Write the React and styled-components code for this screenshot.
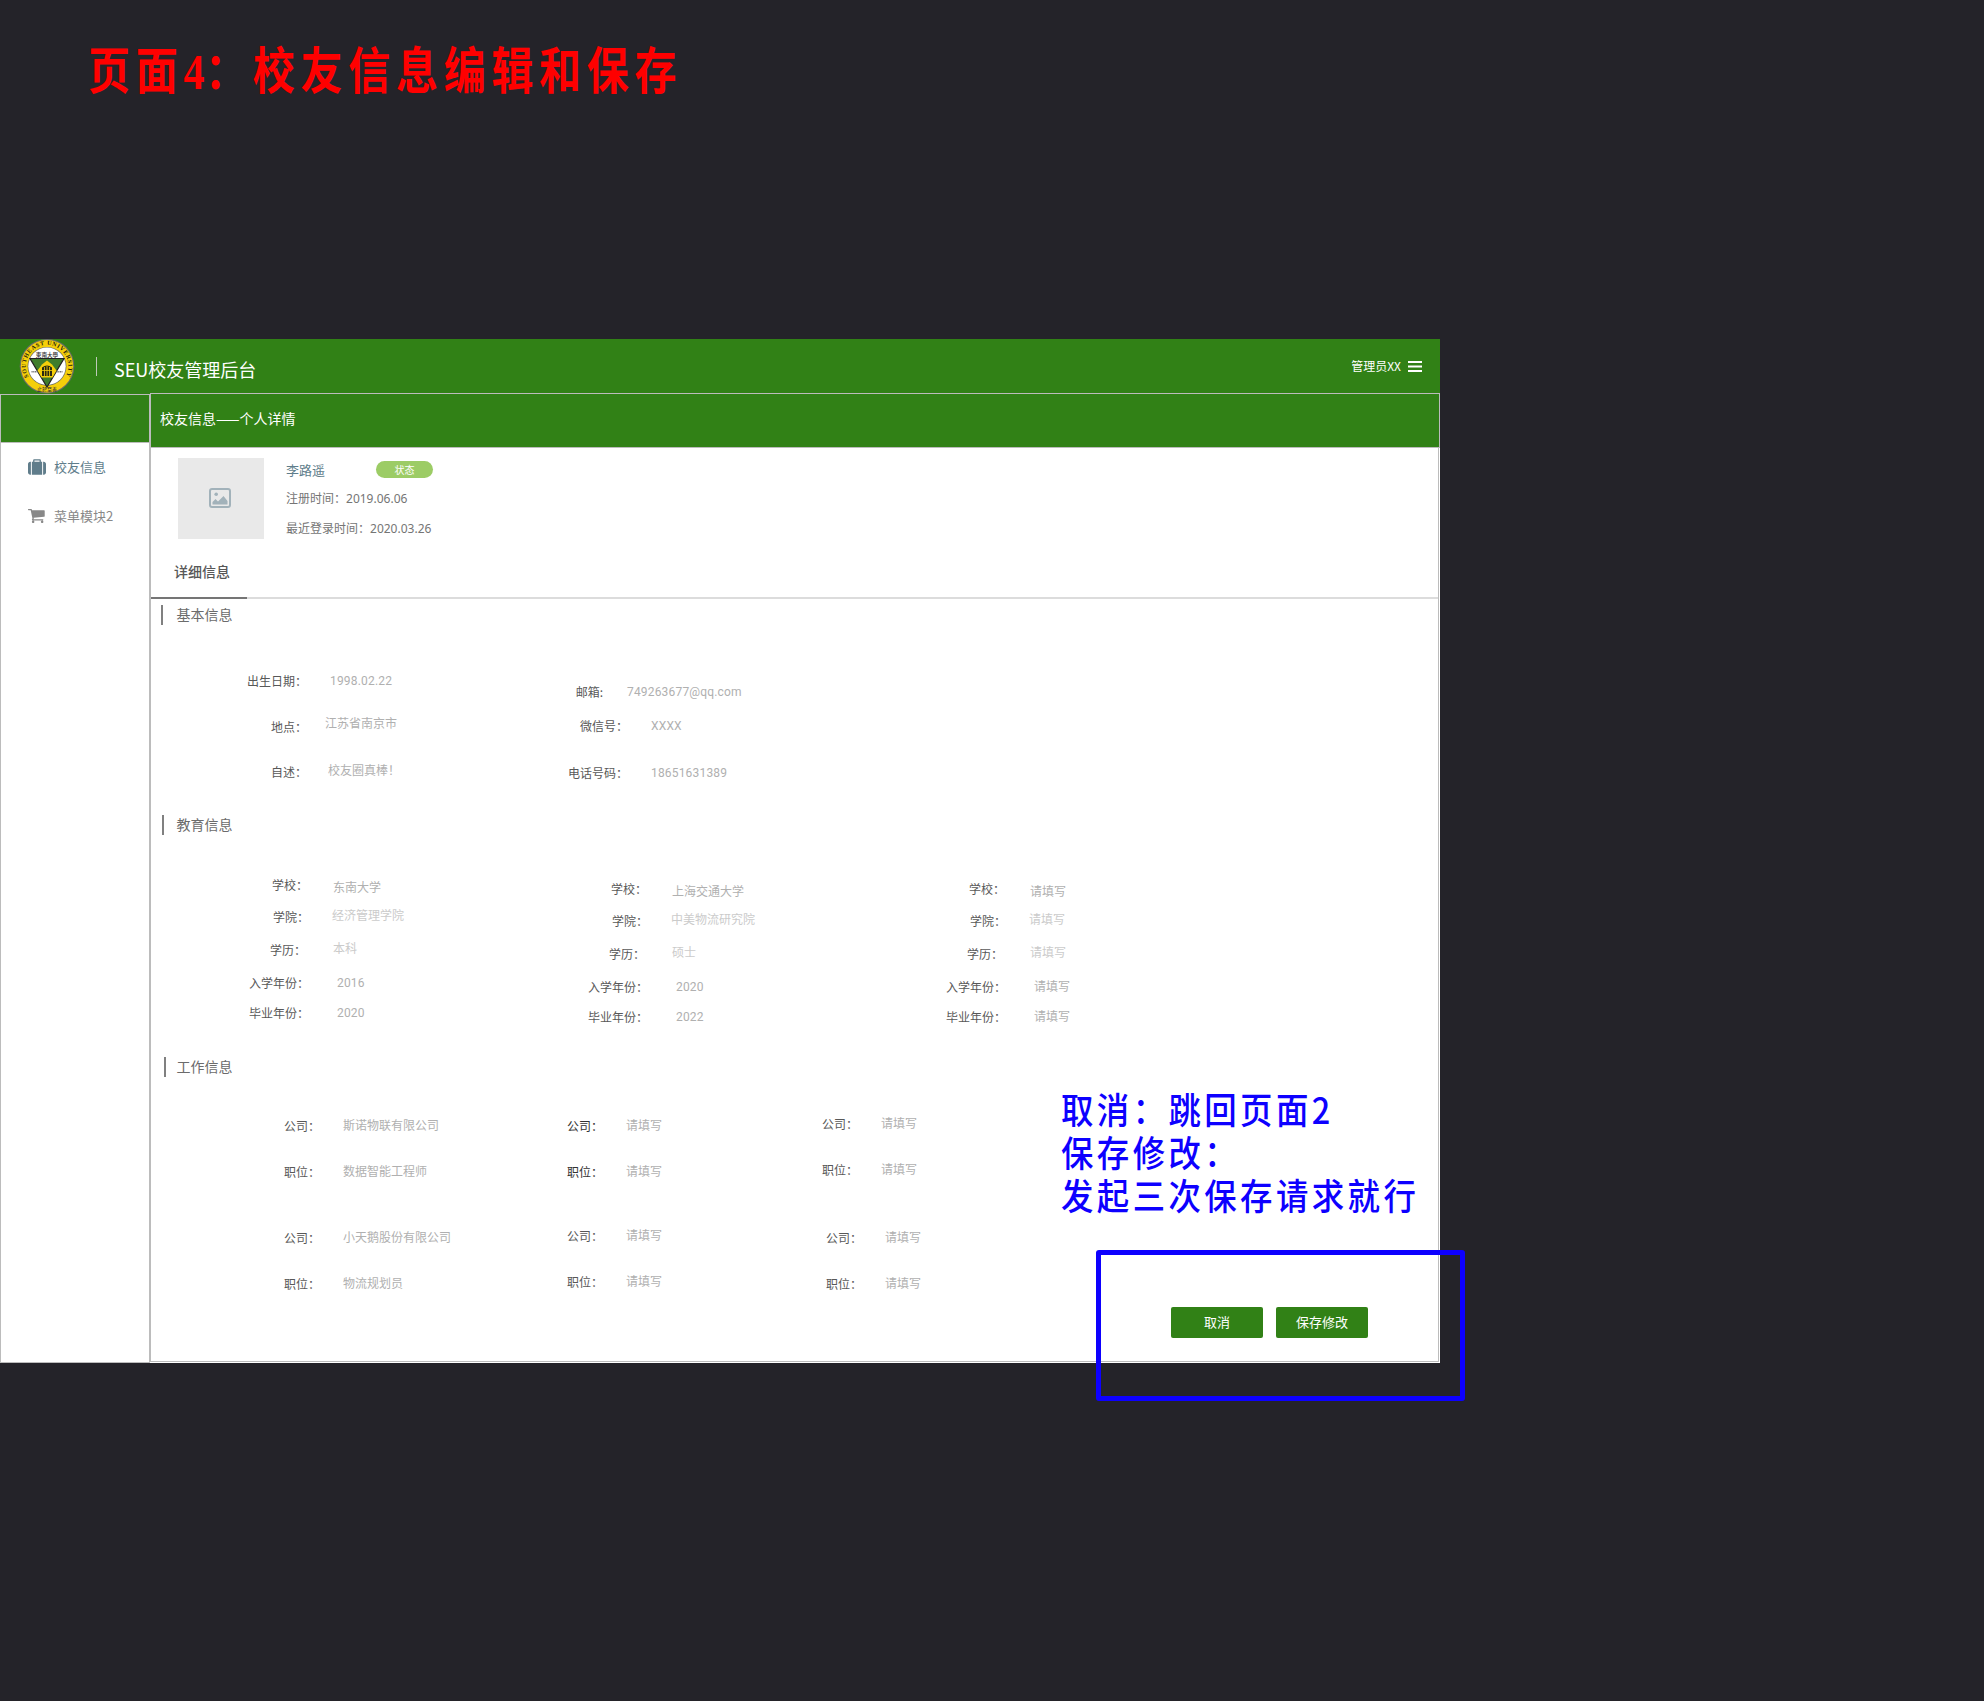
import React from "react";
import styled, { createGlobalStyle } from "styled-components";

const green = "#318116";
const line = "#bcbcbc";
const blue = "#0d00ff";

const GlobalStyle = createGlobalStyle`
  *, *::before, *::after { box-sizing: border-box; }
  html, body { margin: 0; background: #242329; }
  body {
    font-family: "Noto Sans CJK SC", sans-serif;
    font-size: 12px;
    line-height: 16px;
  }
`;

const Board = styled.div`
  position: relative;
  width: 1984px;
  height: 1701px;
  overflow: hidden;
`;

const BoardTitle = styled.h1`
  margin: 0;
  height: 339px;
  padding: 32px 0 0 88px;
  color: #ff0000;
  font-size: 50px;
  line-height: 70px;
  font-weight: 700;
  letter-spacing: 6.8px;
  white-space: nowrap;
`;

const Condensed = styled.span`
  display: inline-block;
  transform: scaleX(0.84);
  transform-origin: 0 50%;
`;

const TitleDigit = styled.span`
  font-family: "Liberation Serif", serif;
  letter-spacing: 0.8px;
`;

const Screen = styled.div`
  width: 1440px;
  height: 1024px;
  background: #fff;
`;

const TopBar = styled.header`
  display: flex;
  align-items: flex-start;
  height: 55px;
  padding-left: 19px;
  background: ${green};
  color: #fff;
`;

const LogoSvg = styled.svg`
  width: 56px;
  height: 55px;
`;

const Divider = styled.span`
  width: 1px;
  height: 19px;
  margin: 18px 0 0 21px;
  background: #bdc9b8;
`;

const Brand = styled.div`
  margin: 17px 0 0 17px;
  font-size: 18px;
  line-height: 26px;
`;

const Account = styled.div`
  display: flex;
  align-items: center;
  gap: 7px;
  margin: 19px 18px 0 auto;
`;

const Burger = styled.svg`
  width: 14px;
  height: 11px;
  margin-top: 1px;
`;

const Columns = styled.div`
  display: flex;
`;

const Sidebar = styled.nav`
  width: 150px;
  height: 969px;
  border: 1px solid ${line};
`;

const SidebarCap = styled.div`
  height: 48px;
  background: ${green};
  border-bottom: 1px solid ${line};
`;

const MenuItem = styled.a`
  display: flex;
  align-items: center;
  gap: 8px;
  height: 20px;
  margin-top: ${(p) => p.$before}px;
  padding-left: 27px;
  font-size: 13px;
  color: ${(p) => (p.$active ? "#607d8b" : "#888")};
  svg { width: 18px; height: 18px; fill: currentColor; }
`;

const Main = styled.main`
  display: flex;
  flex-direction: column;
  width: 1290px;
  height: 970px;
  margin-top: -1px;
`;

const PageHead = styled.div`
  height: 55px;
  padding: 15px 0 0 9px;
  border: 1px solid ${line};
  background: ${green};
  color: #fff;
  font-size: 14px;
  line-height: 18px;
`;

const Panel = styled.div`
  display: flex;
  flex-direction: column;
  height: 914px;
  margin-right: 1px;
  border: 1px solid ${line};
  border-top: 0;
`;

const Profile = styled.div`
  display: flex;
  height: 91px;
  padding: 10px 0 0 27px;
`;

const Avatar = styled.div`
  display: flex;
  align-items: center;
  justify-content: center;
  width: 86px;
  height: 81px;
  padding: 0 2px 1px 0;
  background: #e9e9e9;
  svg { width: 22px; height: 20px; }
`;

const ProfileText = styled.div`
  margin-left: 22px;
  color: #757575;
`;

const NameRow = styled.div`
  display: flex;
  width: 147px;
  height: 20px;
  margin-top: 3px;
  justify-content: space-between;
`;

const Name = styled.span`
  margin-top: 1px;
  font-size: 13px;
  color: #607d8b;
`;

const Badge = styled.span`
  width: 57px;
  height: 17px;
  border-radius: 9px;
  background: #9ccc65;
  color: #fff;
  font-size: 10px;
  line-height: 17px;
  text-align: center;
`;

const Meta = styled.div`
  height: 16px;
  margin-top: ${(p) => p.$before}px;
`;

const DateText = styled.span`
  font-family: "Noto Sans", sans-serif;
`;

const Tabs = styled.div`
  height: 60px;
  border-bottom: 2px solid #dcdcdc;
`;

const Tab = styled.div`
  width: 96px;
  height: 60px;
  padding: 23px 0 0 23px;
  border-bottom: 2px solid #757575;
  color: #585858;
  font-size: 14px;
  line-height: 18px;
  font-weight: 500;
`;

const Section = styled.section`
  height: ${(p) => p.$height}px;
  padding-top: ${(p) => p.$top || 0}px;
`;

const SectionTitle = styled.h2`
  height: 20px;
  margin: 0 0 0 ${(p) => p.$left}px;
  padding-left: ${(p) => 23.5 - p.$left}px;
  border-left: 2px solid #808080;
  color: #6b6b6b;
  font-size: 14px;
  line-height: 18px;
  font-weight: 400;
`;

const Fields = styled.div`
  display: flex;
  margin-top: ${(p) => p.$top}px;
`;

const FieldColumn = styled.div`
  flex: none;
  width: ${(p) => p.$width}px;
  padding-top: ${(p) => p.$top || 0}px;
`;

const Field = styled.div`
  display: flex;
  align-items: flex-start;
  height: 16px;
  margin-top: ${(p) => p.$before}px;
  white-space: nowrap;
`;

const Label = styled.span`
  flex: none;
  width: ${(p) => p.$width}px;
  padding-right: ${(p) => p.$inset}px;
  text-align: right;
  color: ${(p) => (p.$strong ? "#333" : "#585858")};
`;

const Value = styled.span`
  flex: none;
  margin: ${(p) => p.$shift}px 0 0 ${(p) => p.$lead}px;
  color: ${(p) => (p.$faint ? "#cbcbcb" : "#b0b0b0")};
  font-family: Roboto, "Noto Sans CJK SC", sans-serif;
  letter-spacing: ${(p) => (p.$latin ? "0.18px" : "normal")};
`;

const Actions = styled.div`
  display: flex;
  justify-content: flex-end;
  gap: 13px;
  margin-top: auto;
  padding: 0 70px 23px 0;
`;

const Button = styled.button`
  width: 92px;
  height: 31px;
  padding: 0 0 2px;
  border: 0;
  border-radius: 2px;
  background: ${green};
  color: #fff;
  font: 13px/29px "Noto Sans CJK SC", sans-serif;
`;

const Note = styled.div`
  position: absolute;
  left: 1061px;
  top: 1087px;
  color: ${blue};
  font-size: 36px;
  line-height: 43px;
  font-weight: 500;
  letter-spacing: 3.8px;
  white-space: pre;
  transform: scaleX(0.9);
  transform-origin: 0 0;
`;

const Highlight = styled.div`
  position: absolute;
  left: 1096px;
  top: 1250px;
  width: 369px;
  height: 151px;
  border: 5px solid ${blue};
  border-radius: 3px;
`;

/* before: gap above the row, inset: label's distance from the column's label edge,
   lead / shift: offsets of the value beside its label */
const basic = [
  {
    width: 349, label: 156, top: 0,
    rows: [
      { l: "出生日期：", v: "1998.02.22", before: 0, inset: 0, lead: 23, shift: 0 },
      { l: "地点：", v: "江苏省南京市", before: 30, inset: 0, lead: 18, shift: -3 },
      { l: "自述：", v: "校友圈真棒！", before: 29, inset: 0, lead: 21, shift: -1 },
    ],
  },
  {
    width: 400, label: 129, top: 11,
    rows: [
      { l: "邮箱:", v: "749263677@qq.com", before: 0, inset: 26, lead: -2, shift: 0 },
      { l: "微信号：", v: "XXXX", before: 18, inset: 1, lead: 22, shift: 0 },
      { l: "电话号码：", v: "18651631389", before: 31, inset: 1, lead: 22, shift: 0 },
    ],
  },
];

const school = (width, top, values) => ({
  width, label: 158, top,
  rows: [
    { l: "学校：", v: values[0], before: 0, inset: 1, lead: 24, shift: 3 },
    { l: "学院：", v: values[1], before: 16, inset: 0, lead: 23, shift: -1, faint: true },
    { l: "学历：", v: values[2], before: 17, inset: 3, lead: 24, shift: -1, faint: true },
    { l: "入学年份：", v: values[3], before: 17, inset: 0, lead: 28, shift: 0 },
    { l: "毕业年份：", v: values[4], before: 14, inset: 0, lead: 28, shift: 0 },
  ],
});

const empty = "请填写";

const education = [
  school(339, 0, ["东南大学", "经济管理学院", "本科", "2016", "2020"]),
  school(358, 4, ["上海交通大学", "中美物流研究院", "硕士", "2020", "2022"]),
  school(358, 4, [empty, empty, empty, empty, empty]),
];

const job = (width, top, values, { strong, wide, between = 50, inset = 5 } = {}) => ({
  width, label: 174, top,
  rows: values.map((v, i) => ({
    l: i % 2 ? "职位：" : "公司：",
    v,
    before: [0, 30, between, 30][i],
    inset: wide && i > 1 ? inset - 4 : inset,
    lead: wide && i > 1 ? 22 : 18,
    shift: 0,
    strong: strong && i < 2,
  })),
});

const work = [
  job(283, 2, ["斯诺物联有限公司", "数据智能工程师", "小天鹅股份有限公司", "物流规划员"]),
  job(255, 2, [empty, empty, empty, empty], { strong: true, between: 48 }),
  job(300, 0, [empty, empty, empty, empty], { wide: true, between: 52 }),
];

const isLatin = (text) => /^[\x20-\x7e]+$/.test(text);

function FieldSet({ top, columns }) {
  return (
    <Fields $top={top}>
      {columns.map((c, i) => (
        <FieldColumn key={i} $width={c.width} $top={c.top}>
          {c.rows.map((r, j) => (
            <Field key={j} $before={r.before}>
              <Label $width={c.label} $inset={r.inset} $strong={r.strong}>{r.l}</Label>
              <Value $lead={r.lead} $shift={r.shift} $faint={r.faint} $latin={isLatin(r.v)}>{r.v}</Value>
            </Field>
          ))}
        </FieldColumn>
      ))}
    </Fields>
  );
}

function Logo() {
  return (
    <LogoSvg viewBox="0 0 56 55">
      <defs>
        <path id="ringTop" d="M9.5 37.800 A21.3 21.3 0 1 1 46.5 37.800" />
      </defs>
      <circle cx="28" cy="27.3" r="27.3" fill="#6a6c68" />
      <circle cx="28" cy="27.3" r="26.2" fill="#f5cf0a" />
      <circle cx="28" cy="27.3" r="19.4" fill="#6b6b60" />
      <circle cx="28" cy="27.3" r="18.700" fill="#fff" />
      <text fontFamily="Liberation Serif" fontSize="6" fontWeight="700" fill="#1c1c10" letterSpacing=".62">
        <textPath href="#ringTop">SOUTHEAST UNIVERSITY</textPath>
      </text>
      <path d="M11 19.5H45L28 48Z" fill="#3f7d2c" stroke="#222" strokeWidth="1.2" />
      <path d="M18.5 31.5L23 25.5L28 21.5L33 25.5L37.500 31.500L33.500 38.500H22.500Z" fill="#f5cf0a" />
      <path d="M23 28.500q5-4 10 0v8.500H23z" fill="#2b2a12" />
      <path d="M25.500 28v9M28 27v10M30.500 28v9M23 31.500h10" stroke="#f5cf0a" strokeWidth=".8" />
      <path d="M12.500 32.800h6M37.500 32.800h6" stroke="#777" strokeWidth="1.4" strokeDasharray="1.2 .5" />
      <text x="28" y="17.500" textAnchor="middle" fontSize="5.600" fontWeight="500" fill="#333">東南大學</text>
      <text x="28" y="52.200" textAnchor="middle" fontSize="5" fontWeight="500" fill="#333">止於至善</text>
    </LogoSvg>
  );
}

export default function App() {
  return (
    <Board>
      <GlobalStyle />
      <BoardTitle>
        <Condensed>页面<TitleDigit>4</TitleDigit>：校友信息编辑和保存</Condensed>
      </BoardTitle>
      <Screen>
        <TopBar>
          <Logo />
          <Divider />
          <Brand>SEU校友管理后台</Brand>
          <Account>
            <span>管理员XX</span>
            <Burger viewBox="0 0 14 11">
              <path d="M0 1h14M0 5.500h14M0 10h14" stroke="#fff" strokeWidth="2.200" />
            </Burger>
          </Account>
        </TopBar>
        <Columns>
          <Sidebar>
            <SidebarCap />
            <MenuItem $before={14} $active>
              <svg viewBox="0 -128 1792 1792">
                <path d="M640 256h512v-128h-512v128zM288 256v1280h-64q-92 0-158-66t-66-158v-832q0-92 66-158t158-66h64zM1408 256v1280h-1024v-1280h128v-160q0-40 28-68t68-28h576q40 0 68 28t28 68v160h128zM1792 480v832q0 92-66 158t-158 66h-64v-1280h64q92 0 158 66t66 158z" />
              </svg>
              校友信息
            </MenuItem>
            <MenuItem $before={29}>
              <svg viewBox="0 64 1792 1792">
                <path d="M640 1536q0 52-38 90t-90 38-90-38-38-90 38-90 90-38 90 38 38 90zm896 0q0 52-38 90t-90 38-90-38-38-90 38-90 90-38 90 38 38 90zm128-1088v512q0 24-16.500 42.500t-40.500 21.500l-1044 122q13 60 13 70 0 16-24 64h920q26 0 45 19t19 45-19 45-45 19h-1024q-26 0-45-19t-19-45q0-11 8-31.500t16-36 21.500-40 15.500-29.500l-177-823h-204q-26 0-45-19t-19-45 19-45 45-19h256q16 0 28.500 6.500t19.500 15.500 13 24.500 8 26 5.500 29.500 4.500 26h1201q26 0 45 19t19 45z" />
              </svg>
              菜单模块2
            </MenuItem>
          </Sidebar>
          <Main>
            <PageHead>校友信息——个人详情</PageHead>
            <Panel>
              <Profile>
                <Avatar>
                  <svg viewBox="0 0 22 20">
                    <rect x="1" y="1" width="20" height="18" rx="2" fill="none" stroke="#a2b2ba" strokeWidth="2" />
                    <circle cx="7.200" cy="6.200" r="1.800" fill="#a2b2ba" />
                    <path d="M3.500 16.500V14l3-3 2.500 2.500L14.500 8l4 5v3.500z" fill="#a2b2ba" />
                  </svg>
                </Avatar>
                <ProfileText>
                  <NameRow>
                    <Name>李路遥</Name>
                    <Badge>状态</Badge>
                  </NameRow>
                  <Meta $before={9}>注册时间：<DateText>2019.06.06</DateText></Meta>
                  <Meta $before={14}>最近登录时间：<DateText>2020.03.26</DateText></Meta>
                </ProfileText>
              </Profile>
              <Tabs><Tab>详细信息</Tab></Tabs>
              <Section $height={216} $top={6}>
                <SectionTitle $left={10}>基本信息</SectionTitle>
                <FieldSet top={48} columns={basic} />
              </Section>
              <Section $height={242}>
                <SectionTitle $left={11}>教育信息</SectionTitle>
                <FieldSet top={42} columns={education} />
              </Section>
              <Section $height={240}>
                <SectionTitle $left={13}>工作信息</SectionTitle>
                <FieldSet top={39} columns={work} />
              </Section>
              <Actions>
                <Button>取消</Button>
                <Button>保存修改</Button>
              </Actions>
            </Panel>
          </Main>
        </Columns>
      </Screen>
      <Note>{"取消：跳回页面2\n保存修改：\n发起三次保存请求就行"}</Note>
      <Highlight />
    </Board>
  );
}
